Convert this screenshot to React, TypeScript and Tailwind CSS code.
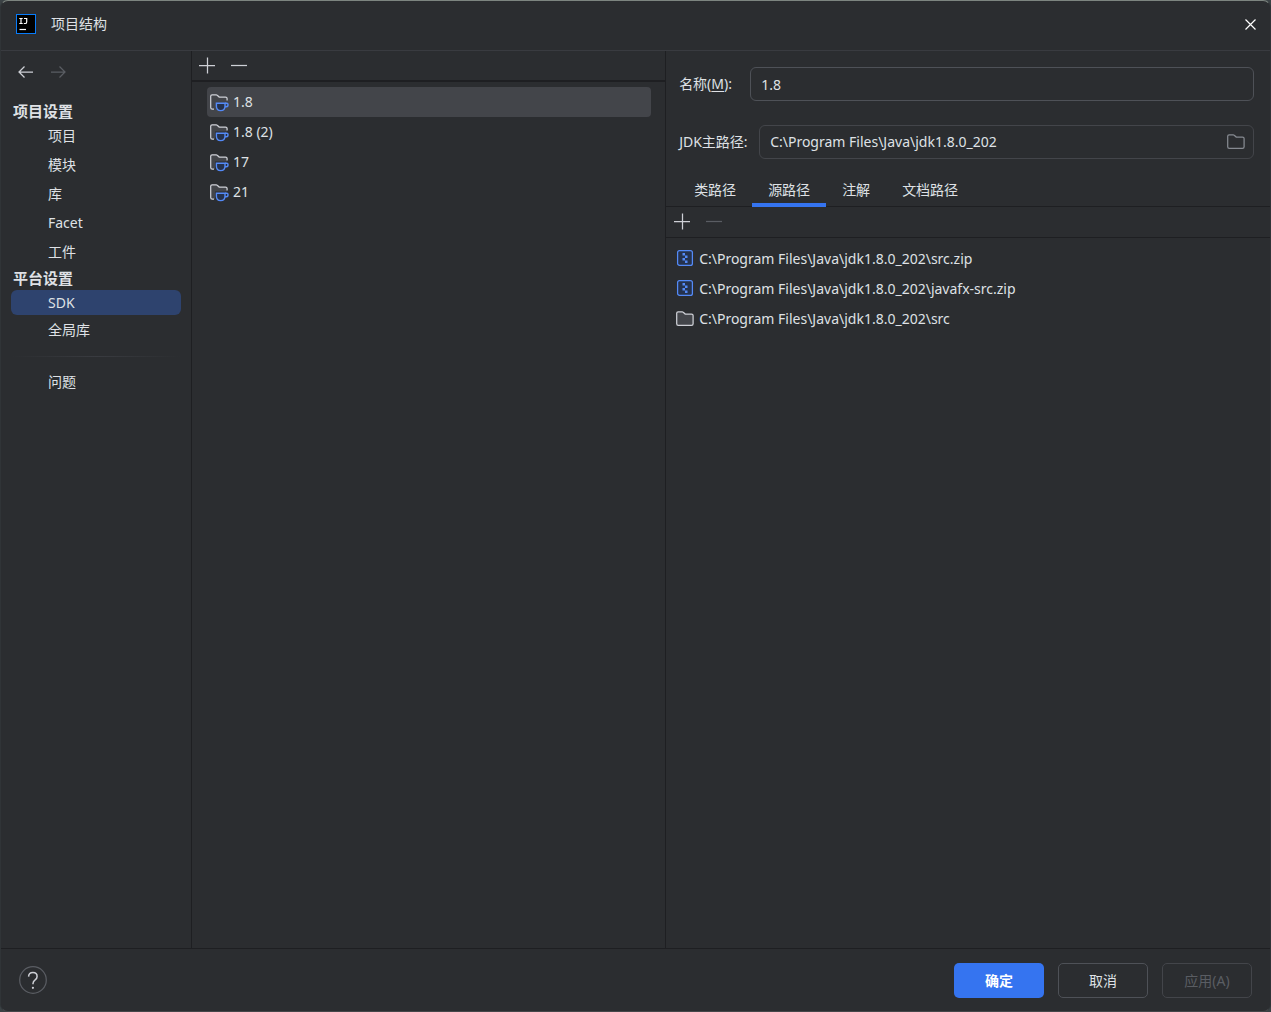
import { useState } from "react";

const projectItems = ["项目", "模块", "库", "Facet", "工件"];
const sdks = ["1.8", "1.8 (2)", "17", "21"];
const tabs = ["类路径", "源路径", "注解", "文档路径"];
const sources = [
  { path: "C:\\Program Files\\Java\\jdk1.8.0_202\\src.zip", zip: true },
  { path: "C:\\Program Files\\Java\\jdk1.8.0_202\\javafx-src.zip", zip: true },
  { path: "C:\\Program Files\\Java\\jdk1.8.0_202\\src", zip: false },
];

const AppLogo = () => (
  <svg width="20" height="20" viewBox="0 0 20 20" fill="none">
    <rect x="0.5" y="0.5" width="19" height="19" fill="#000" stroke="#087cfa" />
    <path
      d="M3.3 4.5h3.4M5 4.5v5M3.3 9.5h3.4M8 4.5h2.7v3.4q0 1.6-1.6 1.6H7.8"
      stroke="#fff"
      strokeWidth="1.2"
    />
    <path d="M3.5 15.5h6.5" stroke="#fff" strokeWidth="1.2" />
  </svg>
);

const ArrowIcon = ({ forward = false }: { forward?: boolean }) => (
  <svg width="20" height="20" viewBox="0 0 20 20" fill="none" stroke="currentColor" strokeWidth="1.25">
    {forward ? (
      <path d="M3 10h14M11.5 4.5L17 10l-5.5 5.5" />
    ) : (
      <path d="M17 10H3M8.5 4.5L3 10l5.5 5.5" />
    )}
  </svg>
);

const PlusIcon = () => (
  <svg width="20" height="20" viewBox="0 0 20 20" stroke="currentColor" strokeWidth="1.25">
    <path d="M2 10.5h16M10.5 2.5v16" />
  </svg>
);

const MinusIcon = () => (
  <svg width="20" height="20" viewBox="0 0 20 20" stroke="currentColor" strokeWidth="1.25">
    <path d="M2 10.5h16" />
  </svg>
);

const FolderIcon = ({ filled = false }: { filled?: boolean }) => (
  <svg width="20" height="20" viewBox="0 0 20 20" fill={filled ? "#43454a" : "none"}>
    <path
      d="M1.7 4.2q0-1.4 1.4-1.4h4.2q.5 0 .9.4l2 1.8h6.3q1.6 0 1.6 1.6v8.2q0 1.6-1.6 1.6H3.3q-1.6 0-1.6-1.6z"
      stroke={filled ? "#ced0d6" : "#868a91"}
      strokeWidth="1.25"
    />
  </svg>
);

const SdkIcon = () => (
  <svg width="20" height="20" viewBox="0 0 20 20" fill="none">
    <path
      d="M6 17.2H3.3q-1.6 0-1.6-1.6V4.2q0-1.4 1.4-1.4h4.2q.5 0 .9.4l2 1.8h6.3q1.6 0 1.6 1.6V9.5H6z"
      fill="#43454a"
    />
    <path
      d="M5 17.2H3.3q-1.6 0-1.6-1.6V4.2q0-1.4 1.4-1.4h4.2q.5 0 .9.4l2 1.8h6.3q1.6 0 1.6 1.6V8.6"
      stroke="#ced0d6"
      strokeWidth="1.25"
    />
    <path
      d="M7.4 11.2h8.6v3q0 4.4-4.3 4.4t-4.3-4.4z"
      fill="#25324d"
      stroke="#548af7"
      strokeWidth="1.4"
    />
    <path d="M16 11.2h1.8q1.2 0 1.2 1.2v.6q0 1.8-1.8 1.8H16" stroke="#548af7" strokeWidth="1.4" />
  </svg>
);

const ZipIcon = () => (
  <svg width="20" height="20" viewBox="0 0 20 20">
    <rect x="2.6" y="1.6" width="14.8" height="14.8" rx="2" fill="#25324d" stroke="#548af7" strokeWidth="1.25" />
    <path
      d="M7.5 4H10v2.5H7.5zM10 6.5h2.5V9H10zM7.5 9H10v2.5H7.5zM10 11.5h2.5V14H10z"
      fill="#548af7"
    />
  </svg>
);

const HelpIcon = () => (
  <svg width="28" height="28" viewBox="0 0 28 28" fill="none">
    <circle cx="14" cy="14" r="13.3" stroke="#5a5d63" strokeWidth="1.25" />
    <path
      d="M9.6 10.6q.2-4 4.3-4 4.2 0 4.2 3.8 0 2-2 3.5-2.1 1.5-2.1 3.6v.8"
      stroke="#ced0d6"
      strokeWidth="1.5"
    />
    <circle cx="13.9" cy="21.8" r="1.1" fill="#ced0d6" />
  </svg>
);

interface NavItemProps {
  label: string;
  selected: boolean;
  onSelect: (label: string) => void;
}

const NavItem = ({ label, selected, onSelect }: NavItemProps) => (
  <li>
    <button
      type="button"
      onClick={() => onSelect(label)}
      className={`flex w-full items-center rounded-md pl-[37px] ${
        selected ? "h-[25px] bg-[#2e436e]" : "h-[29px]"
      }`}
    >
      {label}
    </button>
  </li>
);

const App = () => {
  const [page, setPage] = useState("SDK");
  const [sdk, setSdk] = useState("1.8");
  const [tab, setTab] = useState("源路径");
  const [name, setName] = useState("1.8");
  const [home, setHome] = useState("C:\\Program Files\\Java\\jdk1.8.0_202");

  return (
    <div className="flex min-h-screen bg-[#3b4245] font-['Noto_Sans','Noto_Sans_CJK_SC',sans-serif] text-sm text-[#dfe1e5]">
      <div className="flex flex-1 flex-col rounded-lg border border-x-[#303437] border-t-[#7d8580] border-b-[#45474a] bg-[#2b2d30]">
        <header className="flex h-[50px] items-center border-b border-[#393b40] pr-3 pb-[3px] pl-[15px]">
          <AppLogo />
          <h1 className="ml-[15px] flex-1">项目结构</h1>
          <button type="button" aria-label="关闭" className="flex size-4 items-center justify-center text-white">
            <svg width="11" height="11" viewBox="0 0 11 11" stroke="currentColor" strokeWidth="1.2">
              <path d="M.5.5l10 10M10.5.5l-10 10" />
            </svg>
          </button>
        </header>

        <div className="flex flex-1">
          <nav className="w-[190px] shrink-0 px-2.5">
            <div className="flex h-[50px] items-start gap-3 pt-[11px] pl-[5px]">
              <button type="button" aria-label="后退" className="text-[#ced0d6]">
                <ArrowIcon />
              </button>
              <button type="button" aria-label="前进" className="text-[#5a5d63]">
                <ArrowIcon forward />
              </button>
            </div>
            <h2 className="flex h-5 items-center pt-0.5 pl-0.5 text-[15px] font-bold">项目设置</h2>
            <ul>
              {projectItems.map((item) => (
                <NavItem key={item} label={item} selected={page === item} onSelect={setPage} />
              ))}
            </ul>
            <h2 className="flex h-6 items-center pt-0.5 pl-0.5 text-[15px] font-bold">平台设置</h2>
            <ul className="flex flex-col">
              <NavItem label="SDK" selected={page === "SDK"} onSelect={setPage} />
              <NavItem label="全局库" selected={page === "全局库"} onSelect={setPage} />
            </ul>
            <div className="mt-3 mb-2.5 h-px bg-linear-to-r from-transparent via-[#393b40] to-transparent" />
            <ul>
              <NavItem label="问题" selected={page === "问题"} onSelect={setPage} />
            </ul>
          </nav>

          <section className="flex-[474] border-l border-[#1e1f22]">
            <div className="flex h-[31px] items-center gap-3 border-b-2 border-[#1e1f22] pb-0.5 pl-[5px] text-[#ced0d6]">
              <button type="button" aria-label="添加 SDK">
                <PlusIcon />
              </button>
              <button type="button" aria-label="移除 SDK">
                <MinusIcon />
              </button>
            </div>
            <ul className="pt-[5px] pr-3.5 pl-[15px]">
              {sdks.map((item) => (
                <li key={item}>
                  <button
                    type="button"
                    onClick={() => setSdk(item)}
                    className={`flex h-[30px] w-full items-center gap-1 rounded pl-0.5 ${
                      sdk === item ? "bg-[#43454a]" : ""
                    }`}
                  >
                    <SdkIcon />
                    {item}
                  </button>
                </li>
              ))}
            </ul>
          </section>

          <section className="flex-[605] border-l border-[#1e1f22]">
            <div className="flex flex-col gap-6 pt-4 pr-4 pl-[13px]">
              <div className="flex items-center">
                <label htmlFor="sdk-name" className="w-[71px] shrink-0">
                  名称(<span className="underline underline-offset-2">M</span>):
                </label>
                <input
                  id="sdk-name"
                  value={name}
                  onChange={(e) => setName(e.target.value)}
                  className="h-[34px] min-w-0 flex-1 rounded-md border border-[#4e5157] px-2.5 outline-none"
                />
              </div>
              <div className="flex items-center">
                <label htmlFor="sdk-home" className="w-20 shrink-0 whitespace-nowrap">
                  JDK主路径:
                </label>
                <div className="flex h-[34px] min-w-0 flex-1 items-center rounded-md border border-[#43454a] pr-[7px] pl-2.5">
                  <input
                    id="sdk-home"
                    value={home}
                    onChange={(e) => setHome(e.target.value)}
                    className="min-w-0 flex-1 outline-none"
                  />
                  <button type="button" aria-label="浏览">
                    <FolderIcon />
                  </button>
                </div>
              </div>
            </div>

            <div role="tablist" className="mt-3.5 flex h-[34px] border-b border-[#1e1f22] pl-3">
              {tabs.map((item) => (
                <button
                  key={item}
                  type="button"
                  role="tab"
                  aria-selected={tab === item}
                  onClick={() => setTab(item)}
                  className={`-mb-px flex h-[34px] items-center border-b-4 px-4 pt-1 ${
                    tab === item ? "border-[#3574f0]" : "border-transparent"
                  }`}
                >
                  {item}
                </button>
              ))}
            </div>

            <div className="flex h-[31px] items-center gap-3 border-b border-[#1e1f22] pb-0.5 pl-1.5">
              <button type="button" aria-label="添加路径" className="text-[#ced0d6]">
                <PlusIcon />
              </button>
              <button type="button" aria-label="移除路径" disabled className="text-[#5a5d63]">
                <MinusIcon />
              </button>
            </div>
            <ul className="pt-1.5 pl-[9px]">
              {sources.map(({ path, zip }) => (
                <li key={path} className="flex h-[30px] items-center gap-1">
                  {zip ? <ZipIcon /> : <FolderIcon filled />}
                  {path}
                </li>
              ))}
            </ul>
          </section>
        </div>

        <footer className="flex h-[63px] items-center gap-3.5 border-t border-[#1e1f22] px-[18px]">
          <button type="button" aria-label="帮助" className="mr-auto">
            <HelpIcon />
          </button>
          <button type="button" className="h-[35px] w-[90px] rounded-[5px] bg-[#3574f0] pt-0.5 font-bold text-white">
            确定
          </button>
          <button type="button" className="h-[35px] w-[90px] rounded-[5px] border border-[#4e5157] pt-0.5">
            取消
          </button>
          <button
            type="button"
            disabled
            className="h-[35px] w-[90px] rounded-[5px] border border-[#43454a] pt-0.5 text-[#5a5d63]"
          >
            应用(A)
          </button>
        </footer>
      </div>
    </div>
  );
};

export default App;
